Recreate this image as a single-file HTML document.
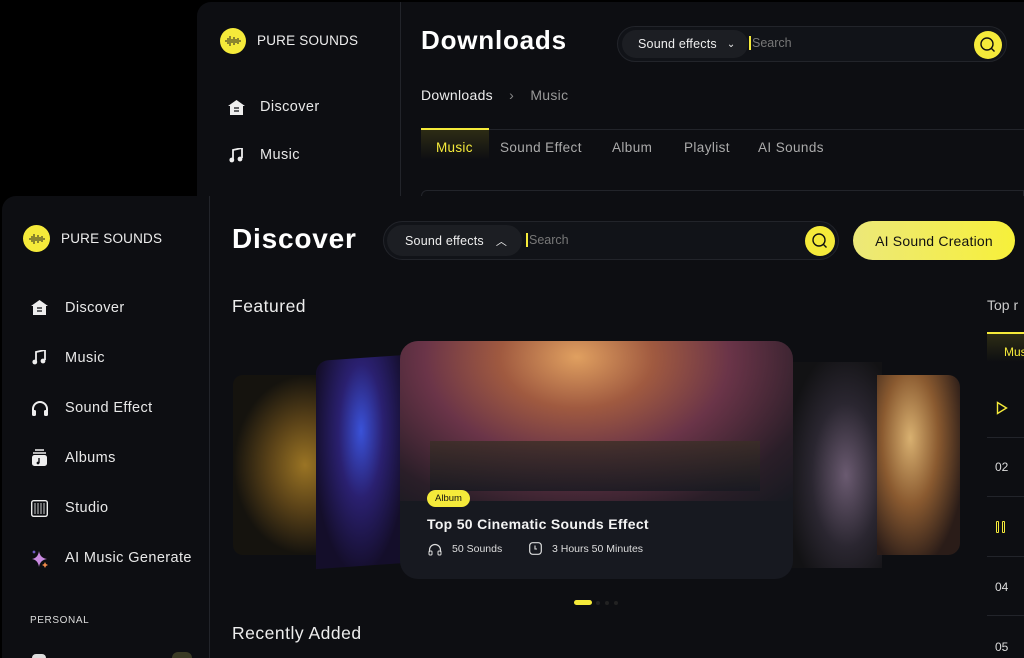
<!DOCTYPE html>
<html><head><meta charset="utf-8"><style>
*{margin:0;padding:0;box-sizing:border-box}
html,body{width:1024px;height:658px;overflow:hidden}
body{background:#000;position:relative;font-family:"Liberation Sans",sans-serif;color:#fff}
.abs{position:absolute}
.win{position:absolute;background:#0d0e12;border-radius:14px 0 0 0}
.logo{width:26px;height:26px;border-radius:50%;background:#f5ea3a;display:flex;align-items:center;justify-content:center}
.nav{position:absolute;font-size:14.5px;color:#e8e8e8;letter-spacing:.4px}
.search{position:absolute;border:1px solid #22242a;background:#111318;border-radius:22px}
.sel{position:absolute;background:#1c1e23;border-radius:16px;font-size:12.5px;color:#eee;display:flex;align-items:center;letter-spacing:.2px}
.sbtn{position:absolute;width:28px;height:28px;border-radius:50%;background:#f5ea3a}
.ph{position:absolute;font-size:12.5px;color:#777;border-left:2px solid #f5ea3a;padding-left:1px}
.sep{position:absolute;height:1px;background:#22242a}
</style></head><body>

<!-- back window -->
<div class="win" style="left:197px;top:2px;width:827px;height:194px"></div>
<div class="abs" style="left:400px;top:2px;width:1px;height:194px;background:#22242a"></div>
<div class="logo abs" style="left:220px;top:28px"><svg width="18" height="12" viewBox="0 0 18 12"><g stroke="#222" stroke-width="1"><path d="M2 5v2M4 3v6M6 1v10M8 4v4M10 2v8M12 4v4M14 3v6M16 5v2"/></g></svg></div>
<div class="abs" style="left:257px;top:33px;font-size:13.5px;color:#eee;letter-spacing:.2px">PURE SOUNDS</div>
<svg class="abs" style="left:228px;top:100px" width="17" height="15" viewBox="0 0 17 15"><path d="M8.5 0L0 6h2v9h13V6h2z" fill="#eee"/><path d="M6 8h5M6 11h5" stroke="#0d0e12" stroke-width="1.3"/></svg>
<div class="nav" style="left:260px;top:99px">Discover</div>
<svg class="abs" style="left:229px;top:148px" width="14" height="15" viewBox="0 0 14 15"><path d="M4 11V2l9-2v10" fill="none" stroke="#eee" stroke-width="1.8"/><circle cx="2.8" cy="12" r="2.4" fill="#eee"/><circle cx="11" cy="11" r="2.4" fill="#eee"/></svg>
<div class="nav" style="left:260px;top:147px">Music</div>
<div class="abs" style="left:421px;top:25px;font-size:26px;font-weight:bold;letter-spacing:.8px">Downloads</div>
<div class="search" style="left:617px;top:26px;width:390px;height:36px"></div>
<div class="sel" style="left:622px;top:30px;width:126px;height:28px;padding-left:16px">Sound effects <span style="margin-left:10px;font-size:10px">⌄</span></div>
<div class="ph" style="left:749px;top:36px">Search</div>
<div class="sbtn" style="left:974px;top:31px"><svg width="28" height="28"><circle cx="13" cy="13" r="6" fill="none" stroke="#111" stroke-width="1.4"/><path d="M17.5 17.5l3 3" stroke="#111" stroke-width="1.4"/></svg></div>
<div class="abs" style="left:421px;top:87px;font-size:14px;color:#eee;letter-spacing:.3px">Downloads <span style="color:#888;margin:0 12px">›</span> <span style="color:#999">Music</span></div>
<div class="sep" style="left:421px;top:129px;width:603px"></div>
<div class="abs" style="left:421px;top:128px;width:68px;height:32px;border-top:2px solid #f5ea3a;background:linear-gradient(#2d2c14,#0d0e12)"></div>
<div class="abs" style="left:436px;top:140px;font-size:13.5px;color:#f5ea3a;letter-spacing:.3px">Music</div>
<div class="abs" style="left:500px;top:140px;font-size:13.5px;color:#aaa;letter-spacing:.4px">Sound Effect</div>
<div class="abs" style="left:612px;top:140px;font-size:13.5px;color:#aaa;letter-spacing:.4px">Album</div>
<div class="abs" style="left:684px;top:140px;font-size:13.5px;color:#aaa;letter-spacing:.4px">Playlist</div>
<div class="abs" style="left:758px;top:140px;font-size:13.5px;color:#aaa;letter-spacing:.4px">AI Sounds</div>
<div class="abs" style="left:421px;top:190px;width:603px;height:6px;border:1px solid #22242a;border-bottom:none;border-radius:8px 0 0 0"></div>

<!-- front window -->
<div class="win" style="left:2px;top:196px;width:1022px;height:462px"></div>
<div class="abs" style="left:209px;top:196px;width:1px;height:462px;background:#22242a"></div>
<div class="logo abs" style="left:23px;top:225px;width:27px;height:27px"><svg width="18" height="12" viewBox="0 0 18 12"><g stroke="#222" stroke-width="1"><path d="M2 5v2M4 3v6M6 1v10M8 4v4M10 2v8M12 4v4M14 3v6M16 5v2"/></g></svg></div>
<div class="abs" style="left:61px;top:231px;font-size:13.5px;color:#eee;letter-spacing:.2px">PURE SOUNDS</div>

<svg class="abs" style="left:31px;top:300px" width="17" height="15" viewBox="0 0 17 15"><path d="M8.5 0L0 6h2v9h13V6h2z" fill="#eee"/><path d="M6 8h5M6 11h5" stroke="#0d0e12" stroke-width="1.3"/></svg>
<div class="nav" style="left:65px;top:300px">Discover</div>
<svg class="abs" style="left:32px;top:350px" width="14" height="15" viewBox="0 0 14 15"><path d="M4 11V2l9-2v10" fill="none" stroke="#eee" stroke-width="1.8"/><circle cx="2.8" cy="12" r="2.4" fill="#eee"/><circle cx="11" cy="11" r="2.4" fill="#eee"/></svg>
<div class="nav" style="left:65px;top:350px">Music</div>
<svg class="abs" style="left:31px;top:400px" width="18" height="17" viewBox="0 0 18 17"><path d="M2 11V9a7 7 0 0114 0v2" fill="none" stroke="#eee" stroke-width="2"/><rect x="1" y="10" width="4" height="6" rx="1.5" fill="#eee"/><rect x="13" y="10" width="4" height="6" rx="1.5" fill="#eee"/></svg>
<div class="nav" style="left:65px;top:400px">Sound Effect</div>
<svg class="abs" style="left:31px;top:449px" width="17" height="18" viewBox="0 0 17 18"><path d="M4 1h9M2 4h13" stroke="#eee" stroke-width="1.5"/><rect x="1" y="6" width="15" height="11" rx="2.5" fill="#eee"/><path d="M8 9v5" stroke="#0d0e12" stroke-width="1.4"/><circle cx="7" cy="14" r="1.4" fill="#0d0e12"/></svg>
<div class="nav" style="left:65px;top:450px">Albums</div>
<svg class="abs" style="left:31px;top:500px" width="17" height="17" viewBox="0 0 17 17"><rect x="0.7" y="0.7" width="15.6" height="15.6" rx="2" fill="none" stroke="#eee" stroke-width="1.4"/><path d="M4 3v11M7 3v11M10 3v11M13 3v11" stroke="#ccc" stroke-width="1"/></svg>
<div class="nav" style="left:65px;top:500px">Studio</div>
<svg class="abs" style="left:30px;top:549px" width="20" height="20" viewBox="0 0 20 20"><path d="M9 2Q10 9 17 10Q10 11 9 18Q8 11 2 10Q8 9 9 2z" fill="#c98ae0"/><path d="M15 13l1 2 2 1-2 1-1 2-1-2-2-1 2-1z" fill="#f08a4a"/><path d="M4 1l.6 1.4L6 3l-1.4.6L4 5l-.6-1.4L2 3l1.4-.6z" fill="#8a6cf0"/></svg>
<div class="nav" style="left:65px;top:550px">AI Music Generate</div>
<div class="abs" style="left:30px;top:615px;font-size:10px;color:#ddd;letter-spacing:.6px">PERSONAL</div>
<div class="abs" style="left:172px;top:652px;width:20px;height:6px;border-radius:10px 10px 0 0;background:#3a3a24"></div>
<div class="abs" style="left:32px;top:654px;width:14px;height:4px;border-radius:4px 4px 0 0;background:#ddd"></div>

<div class="abs" style="left:232px;top:223px;font-size:28px;font-weight:bold;letter-spacing:.8px">Discover</div>
<div class="search" style="left:383px;top:221px;width:456px;height:39px"></div>
<div class="sel" style="left:387px;top:225px;width:135px;height:31px;padding-left:18px">Sound effects <span style="margin-left:12px;font-size:11px">︿</span></div>
<div class="ph" style="left:526px;top:233px">Search</div>
<div class="sbtn" style="left:805px;top:226px;width:30px;height:30px"><svg width="30" height="30"><circle cx="14" cy="14" r="6" fill="none" stroke="#111" stroke-width="1.4"/><path d="M18.5 18.5l3 3" stroke="#111" stroke-width="1.4"/></svg></div>
<div class="abs" style="left:853px;top:221px;width:162px;height:39px;border-radius:20px;background:linear-gradient(90deg,#ece879,#f7f03a);color:#111;font-size:14px;display:flex;align-items:center;justify-content:center;letter-spacing:.2px">AI Sound Creation</div>

<div class="abs" style="left:232px;top:296px;font-size:17.5px;color:#eee;letter-spacing:.5px">Featured</div>
<div class="abs" style="left:987px;top:297px;font-size:14px;color:#ccc">Top r</div>
<div class="abs" style="left:987px;top:332px;width:40px;height:30px;border-top:2px solid #f5ea3a;background:linear-gradient(#2d2c14,#0d0e12)"></div>
<div class="abs" style="left:1004px;top:345px;font-size:12px;color:#f5ea3a">Mus</div>
<svg class="abs" style="left:996px;top:401px" width="12" height="14"><path d="M1.5 1.5L10.5 7L1.5 12.5z" fill="none" stroke="#f5ea3a" stroke-width="1.4"/></svg>
<div class="sep" style="left:987px;top:437px;width:37px"></div>
<div class="abs" style="left:995px;top:460px;font-size:12px;color:#ddd">02</div>
<div class="sep" style="left:987px;top:496px;width:37px"></div>
<div class="abs" style="left:996px;top:521px;width:3px;height:12px;border:1px solid #f5ea3a;border-radius:1px"></div>
<div class="abs" style="left:1002px;top:521px;width:3px;height:12px;border:1px solid #f5ea3a;border-radius:1px"></div>
<div class="sep" style="left:987px;top:556px;width:37px"></div>
<div class="abs" style="left:995px;top:580px;font-size:12px;color:#ddd">04</div>
<div class="sep" style="left:987px;top:615px;width:37px"></div>
<div class="abs" style="left:995px;top:640px;font-size:12px;color:#ddd">05</div>

<!-- carousel -->
<div class="abs" style="left:233px;top:375px;width:90px;height:180px;border-radius:10px 0 0 10px;background:radial-gradient(ellipse at 80% 50%,#9a7424 0%,#5a4218 35%,#15130e 70%)"></div>
<div class="abs" style="left:316px;top:358px;width:90px;height:208px;border-radius:12px 0 0 0;background:radial-gradient(ellipse at 50% 35%,#3a52d8 0%,#2a2070 35%,#140e2a 75%);transform:skewY(-4deg)"></div>
<div class="abs" style="left:792px;top:362px;width:90px;height:206px;background:radial-gradient(ellipse at 60% 55%,#6a5a70 0%,#2a2630 45%,#121214 80%)"></div>
<div class="abs" style="left:877px;top:375px;width:83px;height:180px;border-radius:0 12px 12px 0;background:radial-gradient(ellipse at 40% 35%,#d8b070 0%,#8a5a30 40%,#2a1c18 80%)"></div>
<div class="abs" style="left:400px;top:341px;width:393px;height:238px;border-radius:18px;overflow:hidden;background:#171920">
 <div style="position:absolute;left:0;top:0;width:100%;height:160px;background:radial-gradient(ellipse at 45% 10%,#e0a060 0%,#a05a40 25%,#6a3448 50%,#2a1e28 80%,#171920 100%)"></div>
 <div style="position:absolute;left:30px;top:100px;width:330px;height:50px;background:linear-gradient(#3a2e26,#171920);opacity:.8"></div>
 <div style="position:absolute;left:27px;top:149px;background:#f5ea3a;color:#111;font-size:9.5px;border-radius:9px;padding:3px 8px">Album</div>
 <div style="position:absolute;left:27px;top:175px;font-size:14px;font-weight:bold;color:#f4f4f4;letter-spacing:.3px">Top 50 Cinematic Sounds Effect</div>
 <svg style="position:absolute;left:28px;top:202px" width="14" height="13" viewBox="0 0 14 13"><path d="M1.5 9V7a5.5 5.5 0 0111 0v2" fill="none" stroke="#ddd" stroke-width="1.2"/><rect x="1" y="8" width="3" height="4" rx="1" fill="none" stroke="#ddd"/><rect x="10" y="8" width="3" height="4" rx="1" fill="none" stroke="#ddd"/></svg>
 <div style="position:absolute;left:52px;top:202px;font-size:10.5px;color:#ddd">50 Sounds</div>
 <svg style="position:absolute;left:129px;top:201px" width="13" height="13" viewBox="0 0 13 13"><rect x=".7" y=".7" width="11.6" height="11.6" rx="3" fill="none" stroke="#ddd" stroke-width="1.2"/><path d="M6 3.5v3.5h2" fill="none" stroke="#ddd" stroke-width="1.1"/></svg>
 <div style="position:absolute;left:152px;top:202px;font-size:10.5px;color:#ddd">3 Hours 50 Minutes</div>
</div>
<div class="abs" style="left:574px;top:600px;width:18px;height:5px;border-radius:3px;background:#f5ea3a"></div>
<div class="abs" style="left:596px;top:601px;width:4px;height:4px;border-radius:50%;background:#222"></div>
<div class="abs" style="left:605px;top:601px;width:4px;height:4px;border-radius:50%;background:#222"></div>
<div class="abs" style="left:614px;top:601px;width:4px;height:4px;border-radius:50%;background:#222"></div>
<div class="abs" style="left:232px;top:623px;font-size:17.5px;color:#eee;letter-spacing:.5px">Recently Added</div>
</body></html>
